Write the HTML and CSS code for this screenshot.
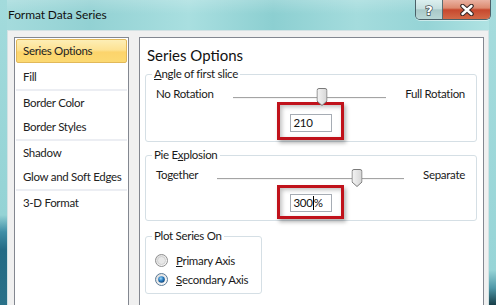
FILE: index.html
```html
<!DOCTYPE html>
<html>
<head>
<meta charset="utf-8">
<link rel="stylesheet" href="styles.css">
</head>
<body>
<div class="window">
  <div class="titlebar">
    <span class="title">Format Data Series</span>
    <div class="caption-btns">
      <div class="cbtn help">
        <svg width="12" height="14" viewBox="0 0 12 14"><text x="6" y="12" text-anchor="middle" class="glyph">?</text></svg>
      </div>
      <div class="cbtn close">
        <svg width="14" height="12" viewBox="0 0 14 12">
          <path d="M2.5 2 L11.5 10 M11.5 2 L2.5 10" class="x-out"/>
          <path d="M2.5 2 L11.5 10 M11.5 2 L2.5 10" class="x-in"/>
        </svg>
      </div>
    </div>
  </div>
  <div class="client">
    <ul class="nav">
      <li class="item selected">Series Options</li>
      <li class="item">Fill</li>
      <li class="sep"></li>
      <li class="item">Border Color</li>
      <li class="item">Border Styles</li>
      <li class="sep"></li>
      <li class="item">Shadow</li>
      <li class="item">Glow and Soft Edges</li>
      <li class="sep"></li>
      <li class="item">3-D Format</li>
    </ul>
    <div class="panel">
      <h1 class="heading">Series Options</h1>
      <fieldset class="group g1">
        <legend><u>A</u>ngle of first slice</legend>
        <div class="slider-row">
          <span>No Rotation</span>
          <div class="track">
            <span class="thumb" style="left:58.3%">
              <svg width="11" height="18" viewBox="0 0 11 18"><defs><linearGradient id="tg1" x1="0" y1="0" x2="1" y2="0"><stop offset="0" stop-color="#f4f4f4"/><stop offset="1" stop-color="#d6d6d6"/></linearGradient></defs><path d="M0.5 2.5 Q0.5 0.5 2.5 0.5 L8.5 0.5 Q10.5 0.5 10.5 2.5 L10.5 13 L5.5 17.5 L0.5 13 Z" fill="url(#tg1)" stroke="#7a7a7a"/></svg>
            </span>
          </div>
          <span>Full Rotation</span>
        </div>
        <div class="value-row">
          <span class="callout c1"><span class="input">210</span></span>
        </div>
      </fieldset>
      <fieldset class="group g2">
        <legend>Pie E<u>x</u>plosion</legend>
        <div class="slider-row">
          <span>Together</span>
          <div class="track">
            <span class="thumb" style="left:74.6%">
              <svg width="11" height="18" viewBox="0 0 11 18"><defs><linearGradient id="tg2" x1="0" y1="0" x2="1" y2="0"><stop offset="0" stop-color="#f4f4f4"/><stop offset="1" stop-color="#d6d6d6"/></linearGradient></defs><path d="M0.5 2.5 Q0.5 0.5 2.5 0.5 L8.5 0.5 Q10.5 0.5 10.5 2.5 L10.5 13 L5.5 17.5 L0.5 13 Z" fill="url(#tg2)" stroke="#7a7a7a"/></svg>
            </span>
          </div>
          <span>Separate</span>
        </div>
        <div class="value-row">
          <span class="callout c2"><span class="input">300<span class="caret"></span>%</span></span>
        </div>
      </fieldset>
      <fieldset class="group g3">
        <legend>Plot Series On</legend>
        <div class="radio-row">
          <svg class="radio" width="13" height="13" viewBox="0 0 13 13"><defs><linearGradient id="rg1" x1="0" y1="0" x2="1" y2="1"><stop offset="0" stop-color="#d9d9d9"/><stop offset="1" stop-color="#ffffff"/></linearGradient></defs><circle cx="6.5" cy="6.5" r="6" fill="url(#rg1)" stroke="#8f8f8f"/><circle cx="6.5" cy="6.5" r="4" fill="#e8e8e8" stroke="#c9c9c9" stroke-width="0.8"/></svg>
          <span><u>P</u>rimary Axis</span>
        </div>
        <div class="radio-row">
          <svg class="radio" width="13" height="13" viewBox="0 0 13 13"><defs><linearGradient id="rg2" x1="0" y1="0" x2="1" y2="1"><stop offset="0" stop-color="#d9d9d9"/><stop offset="1" stop-color="#ffffff"/></linearGradient><radialGradient id="dot" cx="0.4" cy="0.35" r="0.7"><stop offset="0" stop-color="#9fd8f8"/><stop offset="0.5" stop-color="#2a7fc4"/><stop offset="1" stop-color="#0f3f70"/></radialGradient></defs><circle cx="6.5" cy="6.5" r="6" fill="url(#rg2)" stroke="#5a7a96"/><circle cx="6.5" cy="6.5" r="3.3" fill="url(#dot)"/></svg>
          <span><u>S</u>econdary Axis</span>
        </div>
      </fieldset>
    </div>
  </div>
</div>
</body>
</html>
```
FILE: styles.css
```css
* { box-sizing: border-box; }
html, body { margin: 0; padding: 0; }
body {
  width: 496px;
  height: 305px;
  overflow: hidden;
  font-family: Lato, "Noto Sans", sans-serif;
  font-size: 11.5px;
  letter-spacing: -0.3px;
  color: #1a1a1a;
}
.window {
  width: 496px;
  height: 305px;
  padding: 0 7px;
  background:
    linear-gradient(#a3dbdc 0, #94d3d5 215px, #3f8ea6 232px, #236a84 250px, #2a7189 305px) left top / 7px 100% no-repeat,
    linear-gradient(#a6dcdd 0, #97d5d7 270px, #4f98a8 288px, #173e48 305px) right top / 7px 100% no-repeat,
    linear-gradient(to bottom, rgba(255,255,255,0.18), rgba(255,255,255,0) 14px),
    linear-gradient(to right, #a6dcdd 0, #92d1d3 18%, #a9dfe0 38%, #8ccfd1 55%, #a4dcdd 72%, #95d4d6 86%, #b2e4e4 100%);
}
.titlebar {
  height: 30px;
  display: flex;
  align-items: flex-start;
  justify-content: space-between;
  margin-right: -2px;
}
.title {
  margin-top: 7px;
  margin-left: 1px;
  font-size: 12px;
  letter-spacing: -0.1px;
  line-height: 16px;
  color: #111;
}
.caption-btns {
  display: flex;
  height: 20px;
  border: 1px solid #4b6068;
  border-top: none;
  border-radius: 0 0 5px 5px;
  overflow: hidden;
  box-shadow: 0 1px 0 rgba(255,255,255,0.5);
}
.cbtn {
  display: flex;
  align-items: center;
  justify-content: center;
}
.help {
  width: 27px;
  background: linear-gradient(#dcefef 0, #c6dfdf 45%, #a9c9c9 52%, #b9d7d6 100%);
  border-right: 1px solid #5a6d72;
}
.close {
  width: 47px;
  background: linear-gradient(#eab2a2 0, #dc8a70 42%, #c7482e 52%, #d36a48 100%);
}
.glyph {
  font-family: "DejaVu Sans", sans-serif;
  font-weight: bold;
  font-size: 13px;
  letter-spacing: 0;
  fill: #ffffff;
  stroke: #3d4a50;
  stroke-width: 1.4px;
  paint-order: stroke;
}
.x-out { stroke: #3b2a28; stroke-width: 4.6; stroke-linecap: round; fill: none; }
.x-in { stroke: #ffffff; stroke-width: 2.4; stroke-linecap: round; fill: none; }

.client {
  height: 275px;
  background: #f0f0f0;
  border: 1px solid #d3e2e4;
  border-bottom: none;
  padding: 6px 4px 0 6px;
  display: flex;
  align-items: flex-start;
  gap: 10px;
  overflow: hidden;
}
.nav {
  list-style: none;
  margin: 0;
  width: 115px;
  height: 290px;
  flex: none;
  padding: 1px;
  background: #ffffff;
  border: 1px solid #838790;
}
.item {
  height: 24px;
  line-height: 24px;
  padding-left: 7px;
  white-space: nowrap;
  color: #222;
}
.item.selected {
  padding-left: 6px;
  line-height: 22px;
  border: 1px solid #e2b95a;
  border-radius: 2px;
  background: linear-gradient(#fdeeb5 0, #fde293 45%, #fcd46c 55%, #fcd972 100%);
  margin-bottom: 2px;
}
.sep {
  height: 2px;
  background: #eceef3;
}
.panel {
  width: 345px;
  height: 290px;
  flex: none;
  background: #ffffff;
  border: 1px solid #838790;
  padding: 7px 6px 0 5px;
}
.heading {
  margin: 0 0 0 2px;
  font-size: 15px;
  letter-spacing: 0;
  line-height: 20px;
  font-weight: normal;
  color: #111;
}
.group {
  margin: 0;
  border: 1px solid #d5dfe5;
  border-radius: 3px;
  padding: 0 11px 1px 10px;
  min-inline-size: 0;
}
.group legend {
  margin-left: -4px;
  padding: 0 2px;
  line-height: 16px;
}
.g1 { margin-top: 1px; }
.g2 { margin-top: 5px; }
.g3 { margin-top: 7px; width: 117px; padding-top: 7px; padding-bottom: 4px; }

.slider-row {
  display: flex;
  align-items: center;
  height: 16px;
  line-height: 16px;
  margin-top: 4px;
  white-space: nowrap;
}
.track {
  flex: 1;
  position: relative;
  height: 2px;
  margin: 7px 19px 0;
  border-top: 1px solid #a4a4a4;
  border-bottom: 1px solid #f4f4f4;
}
.thumb {
  position: absolute;
  top: -10px;
  width: 11px;
  height: 18px;
  transform: translateX(-50%);
}
.thumb svg { display: block; }

.value-row {
  display: flex;
  justify-content: center;
}
.callout {
  width: 67px;
  border: 3px solid #c0121b;
  box-shadow: 2px 3px 4px rgba(0,0,0,0.3), inset 2px 2px 4px rgba(0,0,0,0.25);
  display: flex;
  justify-content: center;
}
.c1 { padding: 9px 0 5px; }
.c2 { margin-top: 2px; padding: 6px 0 4px; }
.input {
  display: block;
  width: 42px;
  height: 18px;
  border: 1px solid #a6acb4;
  background: #ffffff;
  padding-left: 3px;
  line-height: 16px;
  color: #111;
}
.caret {
  display: inline-block;
  width: 0;
  height: 14px;
  border-left: 1px solid #000;
  vertical-align: -3px;
}
.radio-row {
  display: flex;
  align-items: center;
  height: 19px;
  gap: 8px;
  margin-left: -1px;
  white-space: nowrap;
}
.radio { flex: none; display: block; }
```
